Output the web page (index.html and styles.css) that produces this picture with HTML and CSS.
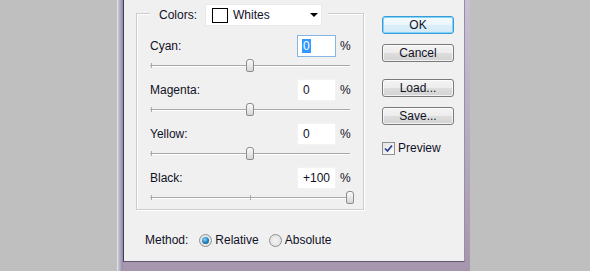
FILE: index.html
```html
<!DOCTYPE html>
<html lang="en">
<head>
  <meta charset="UTF-8" />
  <title>Selective Color</title>
  <link rel="stylesheet" href="styles.css">
</head>
<body>
  <div class="window">
    <div class="dialog">
      <div class="main">
        <div class="group">
          <div class="group-head">
            <span class="head-label">Colors:</span>
            <div class="select">
              <span class="swatch"></span>
              <span class="select-text">Whites</span>
              <span class="arrow"></span>
            </div>
          </div>

          <div class="channel">
            <div class="channel-top">
              <span class="channel-label">Cyan:</span>
              <div class="field focused"><span class="value selected">0</span></div>
              <span class="pct">%</span>
            </div>
            <div class="slider"><span class="tick"></span><span class="tick mid"></span><span class="thumb" style="left: 50%"></span></div>
          </div>

          <div class="channel">
            <div class="channel-top">
              <span class="channel-label">Magenta:</span>
              <div class="field"><span class="value">0</span></div>
              <span class="pct">%</span>
            </div>
            <div class="slider"><span class="tick"></span><span class="tick mid"></span><span class="thumb" style="left: 50%"></span></div>
          </div>

          <div class="channel">
            <div class="channel-top">
              <span class="channel-label">Yellow:</span>
              <div class="field"><span class="value">0</span></div>
              <span class="pct">%</span>
            </div>
            <div class="slider"><span class="tick"></span><span class="tick mid"></span><span class="thumb" style="left: 50%"></span></div>
          </div>

          <div class="channel">
            <div class="channel-top">
              <span class="channel-label">Black:</span>
              <div class="field"><span class="value">+100</span></div>
              <span class="pct">%</span>
            </div>
            <div class="slider"><span class="tick"></span><span class="tick mid"></span><span class="thumb" style="left: 100%"></span></div>
          </div>
        </div>

        <div class="method">
          <span class="method-label">Method:</span>
          <label class="radio"><span class="radio-dot checked"></span>Relative</label>
          <label class="radio"><span class="radio-dot"></span>Absolute</label>
        </div>
      </div>

      <div class="side">
        <button class="btn btn-default">OK</button>
        <button class="btn btn-cancel">Cancel</button>
        <button class="btn btn-load">Load...</button>
        <button class="btn btn-save">Save...</button>
        <label class="check">
          <span class="check-box">
            <svg width="9" height="9" viewBox="0 0 9 9"><path d="M1 4.5 L3.5 7 L8 1.5" fill="none" stroke="#2b3f8e" stroke-width="1.7"/></svg>
          </span>
          Preview
        </label>
      </div>
    </div>
  </div>
</body>
</html>
```

FILE: styles.css
```css
body {
  margin: 0;
  height: 271px;
  overflow: hidden;
  background: #bfbfbf;
  font-family: "Liberation Sans", Arial, sans-serif;
  font-size: 12px;
  color: #111126;
}

/* window frame */
.window {
  width: 342px;
  margin-left: 117px;
  padding: 0 5px 10px 5px;
  border-left: 1px solid #e0dfe8;
  background:
    linear-gradient(to right, #c9c8d6 0, #8e8aa4 5px, transparent 5px),
    linear-gradient(#c6c2d0, #a595ad);
}

.dialog {
  height: 261px;
  background: #f0f0f0;
  border-left: 1px solid #3f3d5a;
  border-right: 1px solid #978ea6;
  border-bottom: 1px solid #62566e;
  display: grid;
  grid-template-columns: 228px 72px;
  column-gap: 18px;
  padding-left: 12px;
  align-items: start;
}

/* group box */
.group {
  box-sizing: border-box;
  height: 197px;
  margin-top: 13px;
  padding: 0 13px;
  border: 1px solid #cdcdcd;
  box-shadow: inset 1px 1px 0 #fff, 1px 1px 0 #fff;
}

.group-head {
  display: flex;
  align-items: center;
  width: fit-content;
  height: 22px;
  margin-top: -10px;
  padding: 0 6px 0 9px;
  background: #f0f0f0;
}

.select {
  display: flex;
  align-items: center;
  width: 117px;
  height: 22px;
  box-sizing: border-box;
  margin-left: 8px;
  background: #fff;
  border: 1px solid #e9e9e9;
}

.swatch {
  width: 14px;
  height: 13px;
  margin-left: 6px;
  border: 1px solid #000;
  background: #fff;
}

.select-text {
  margin-left: 5px;
}

.arrow {
  margin-left: auto;
  margin-right: 3px;
  width: 0;
  height: 0;
  border-left: 4px solid transparent;
  border-right: 4px solid transparent;
  border-top: 4px solid #000;
}

/* channel rows */
.channel {
  margin-bottom: 7px;
}

.group-head + .channel {
  margin-top: 9px;
}

.channel-top {
  display: grid;
  grid-template-columns: 147px 39px auto;
  align-items: center;
  height: 22px;
}

.field {
  box-sizing: border-box;
  height: 22px;
  padding-left: 4px;
  background: #fff;
  border: 1px solid #f3f3f3;
  display: flex;
  align-items: center;
}

.field.focused {
  border-color: #86b7e4;
}

.value {
  padding: 1px 1px;
  line-height: 12px;
}

.value.selected {
  background: #3399ff;
  color: #fff;
}

.pct {
  margin-left: 4px;
}

.slider {
  position: relative;
  height: 13px;
  margin-top: 2px;
  width: 200px;
}

.slider::before {
  content: "";
  position: absolute;
  left: 0;
  right: 0;
  top: 6px;
  height: 1px;
  background: #a9a9a9;
  box-shadow: 0 1px 0 #fff;
}

.tick {
  position: absolute;
  top: 4px;
  left: 1px;
  width: 1px;
  height: 5px;
  background: #a9a9a9;
}

.tick.mid {
  left: 50%;
}

.thumb {
  position: absolute;
  top: 0;
  width: 6px;
  height: 11px;
  transform: translateX(-50%);
  border: 1px solid #8d8d8d;
  border-radius: 3px 3px 2px 2px;
  background: linear-gradient(#fbfbfb, #d6d6d6);
}

/* method row */
.method {
  display: flex;
  align-items: center;
  height: 20px;
  margin-top: 20px;
  padding-left: 9px;
}

.radio {
  display: flex;
  align-items: center;
}

.radio-dot {
  box-sizing: border-box;
  width: 13px;
  height: 13px;
  margin-right: 3px;
  border: 1px solid #8e8f8f;
  border-radius: 50%;
  background: radial-gradient(circle at 50% 50%, #f4f4f4 0, #dcdcdc 100%);
  display: flex;
  align-items: center;
  justify-content: center;
}

.method-label + .radio .radio-dot {
  margin-left: 11px;
}

.radio + .radio .radio-dot {
  margin-left: 10px;
}

.radio-dot.checked::after {
  content: "";
  width: 7px;
  height: 7px;
  border-radius: 50%;
  background: radial-gradient(circle at 40% 35%, #8fd3f5 0, #2a8fc8 45%, #0b3d63 100%);
}

/* buttons */
.side {
  display: flex;
  flex-direction: column;
  padding-top: 16px;
}

.btn {
  box-sizing: border-box;
  width: 72px;
  height: 18px;
  padding: 0;
  font: inherit;
  color: #111126;
  border: 1px solid #7a7a7a;
  border-radius: 3px;
  background: linear-gradient(#f4f4f4 0%, #ececec 50%, #dedede 50%, #d2d2d2 100%);
  box-shadow: inset 0 0 0 1px rgba(255, 255, 255, 0.7);
  line-height: 15px;
}

.btn-default {
  border-color: #3a9bd9;
  background: linear-gradient(#f5fbfe 0%, #eaf5fb 50%, #dceff9 50%, #d2eaf7 100%);
  box-shadow: inset 0 0 0 1px #7fd4f8;
}

.btn-cancel {
  margin-top: 10px;
}

.btn-load {
  margin-top: 17px;
}

.btn-save {
  margin-top: 10px;
}

.check {
  display: flex;
  align-items: center;
  margin-top: 16px;
}

.check-box {
  box-sizing: border-box;
  width: 13px;
  height: 13px;
  margin-right: 3px;
  border: 1px solid #8e8f8f;
  background: linear-gradient(135deg, #e4e4e4, #fbfbfb);
  display: flex;
  align-items: center;
  justify-content: center;
}
```
